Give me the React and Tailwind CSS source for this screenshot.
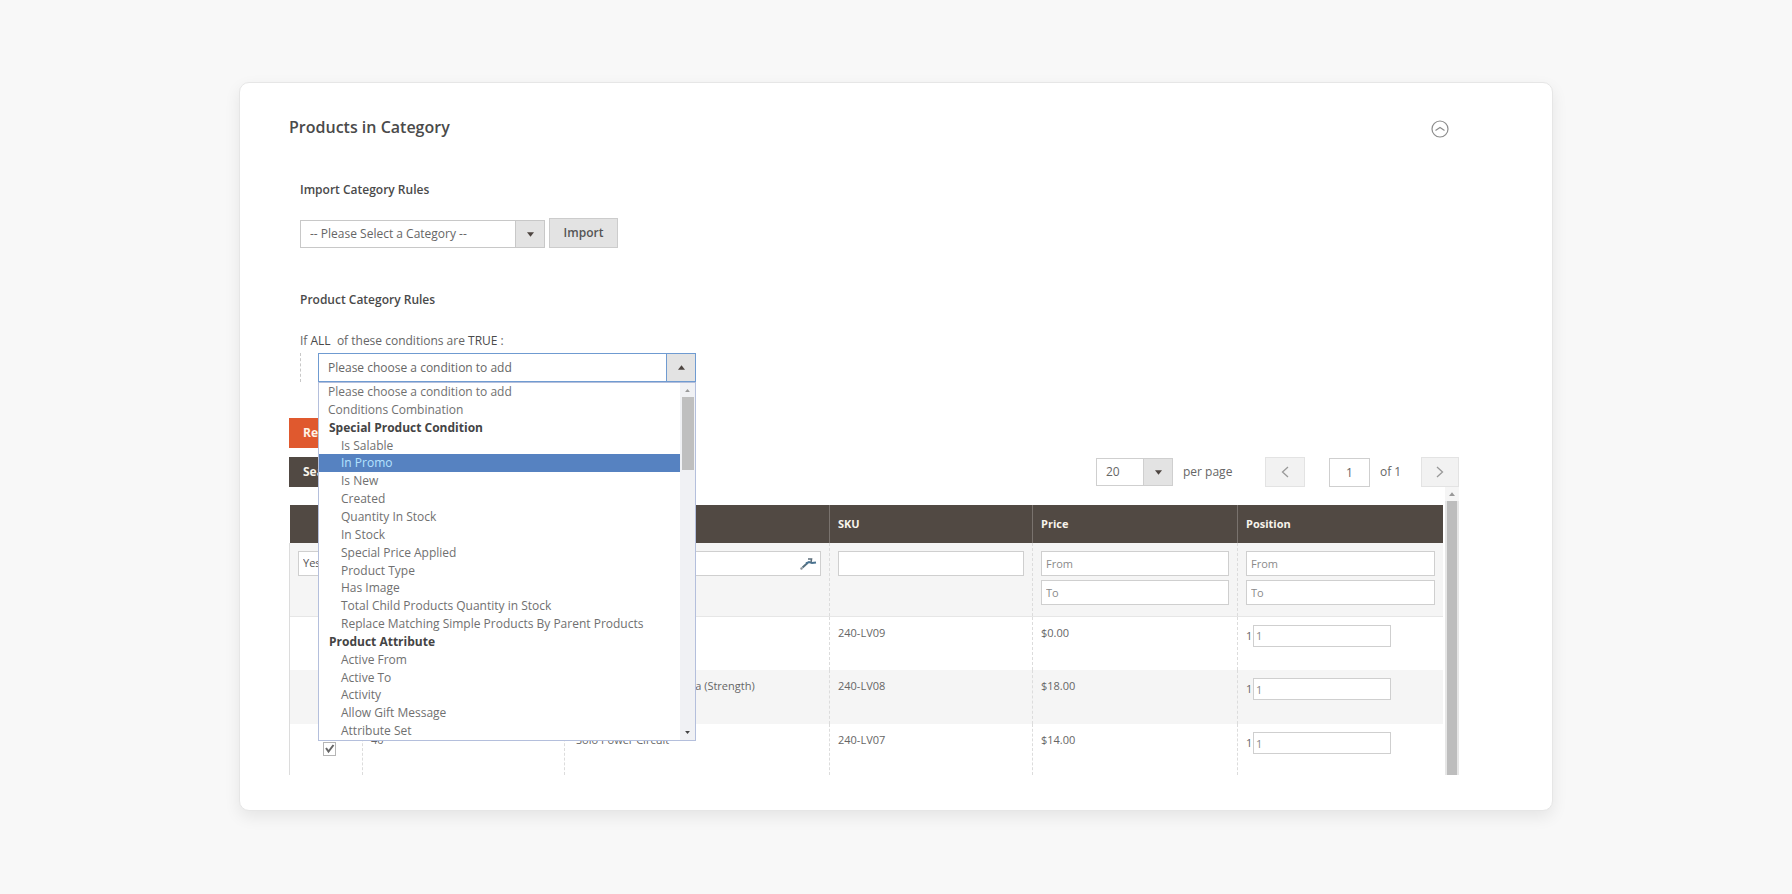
import { useState } from "react";

const conditionOptions = [
  { label: "Please choose a condition to add", kind: "root" },
  { label: "Conditions Combination", kind: "root" },
  { label: "Special Product Condition", kind: "group" },
  { label: "Is Salable" },
  { label: "In Promo" },
  { label: "Is New" },
  { label: "Created" },
  { label: "Quantity In Stock" },
  { label: "In Stock" },
  { label: "Special Price Applied" },
  { label: "Product Type" },
  { label: "Has Image" },
  { label: "Total Child Products Quantity in Stock" },
  { label: "Replace Matching Simple Products By Parent Products" },
  { label: "Product Attribute", kind: "group" },
  { label: "Active From" },
  { label: "Active To" },
  { label: "Activity" },
  { label: "Allow Gift Message" },
  { label: "Attribute Set" },
];

const products = [
  { sku: "240-LV09", price: "$0.00", position: 1 },
  { name: "Advanced Pilates & Yoga (Strength)", sku: "240-LV08", price: "$18.00", position: 1 },
  { id: 40, name: "Solo Power Circuit", sku: "240-LV07", price: "$14.00", position: 1 },
];

const filterInput =
  "block h-[25px] w-full border border-[#cfcfcf] bg-white px-1 text-[11px] text-[#555] outline-none placeholder:text-[#8a8a8a]";
const cell = "border-l border-dashed border-[#dcdcdc] px-2 first:border-solid";
const headCell = "border-l border-[#79726d] px-2";

function Caret({ up = false, className = "" }) {
  return (
    <svg viewBox="0 0 8 5" className={className} aria-hidden="true">
      <path d={up ? "M0 5 L4 0 L8 5 Z" : "M0 0 L4 5 L8 0 Z"} fill="currentColor" />
    </svg>
  );
}

function ArrowBox({ up = false, className = "" }) {
  return (
    <span
      className={`pointer-events-none absolute inset-y-0 right-0 flex w-[30px] items-center justify-center border bg-[#e3e3e3] text-[#4d4540] ${className}`}
    >
      <Caret up={up} className="h-[5px] w-[7px]" />
    </span>
  );
}

function ConditionPicker() {
  const [active, setActive] = useState("In Promo");

  return (
    <div className="relative w-[378px]">
      <select
        aria-label="Condition"
        className="block h-[29px] w-full appearance-none border border-[#6f9bd1] bg-white pl-[9px] text-[12px] text-[#666] outline-none"
      >
        <option>Please choose a condition to add</option>
      </select>
      <ArrowBox up className="border-[#6f9bd1]" />

      {/* Open list */}
      <div className="absolute top-full left-0 z-10 flex w-full border border-[#b4bfdc] bg-white">
        <ul role="listbox" aria-label="Conditions" className="grid h-[357px] flex-1 auto-rows-fr">
          {conditionOptions.map(({ label, kind }) => (
            <li
              key={label}
              role="option"
              aria-selected={label === active}
              onMouseEnter={() => !kind && setActive(label)}
              className={`text-[12px] leading-[17px] ${
                kind === "group"
                  ? "pl-[10px] font-bold text-[#444]"
                  : kind === "root"
                    ? "pl-[9px] text-[#707070]"
                    : label === active
                      ? "bg-[#5682c1] pl-[22px] text-[#b5e2ff]"
                      : "pl-[22px] text-[#707070]"
              }`}
            >
              {label}
            </li>
          ))}
        </ul>
        <div className="flex w-[15px] flex-col items-center bg-[#f0f1f4]">
          <span className="flex h-[14px] items-center text-[#999]">
            <Caret up className="h-[3px] w-[5px]" />
          </span>
          <span className="h-[73px] w-3 bg-[#bfbfbf]" />
          <span className="mt-auto flex h-4 items-center text-[#444]">
            <Caret className="h-[3px] w-[5px]" />
          </span>
        </div>
      </div>
    </div>
  );
}

function Pager() {
  return (
    <div className="flex h-[30px] items-center text-[12px] text-[#666]">
      <div className="relative w-[77px]">
        <select
          id="per-page"
          className="block h-[28px] w-full appearance-none border border-[#cfcfcf] bg-white pl-[9px] outline-none"
        >
          <option>20</option>
        </select>
        <ArrowBox className="border-[#cfcfcf]" />
      </div>
      <label htmlFor="per-page" className="ml-[10px] w-[52px] whitespace-nowrap">
        per page
      </label>
      <button aria-label="Previous page" className="ml-[30px] flex h-[30px] w-10 items-center justify-center border border-[#e3e3e3] bg-[#f2f2f2]">
        <svg viewBox="0 0 8 12" className="h-3 w-2" fill="none" stroke="#999" strokeWidth="1.3">
          <path d="M7 1 L1.5 6 L7 11" />
        </svg>
      </button>
      <input
        id="page"
        defaultValue="1"
        className="ml-6 h-[29px] w-[41px] border border-[#cfcfcf] bg-white text-center outline-none"
      />
      <label htmlFor="page" className="ml-[10px] w-[22px] whitespace-nowrap">
        of 1
      </label>
      <button aria-label="Next page" className="ml-[19px] flex h-[30px] w-[38px] items-center justify-center border border-[#e3e3e3] bg-[#f2f2f2]">
        <svg viewBox="0 0 8 12" className="h-3 w-2" fill="none" stroke="#999" strokeWidth="1.3">
          <path d="M1 1 L6.5 6 L1 11" />
        </svg>
      </button>
    </div>
  );
}

function RowCheckbox({ label }) {
  return (
    <span className="relative flex h-[14px] w-[13px]">
      <input
        type="checkbox"
        defaultChecked
        aria-label={label}
        className="peer h-[14px] w-[13px] appearance-none border border-[#b5b5b5] bg-white"
      />
      <svg
        viewBox="0 0 13 14"
        className="pointer-events-none absolute inset-0 hidden h-[14px] w-[13px] peer-checked:block"
        fill="none"
        stroke="#666"
        strokeWidth="2"
      >
        <path d="M3 6 L5.500 9.500 L10.500 3" />
      </svg>
    </span>
  );
}

function ProductTable() {
  return (
    <table className="flex-1 table-fixed border-collapse text-left text-[11px] text-[#666]">
      <colgroup>
        <col className="w-[73px]" />
        <col className="w-[202px]" />
        <col className="w-[265px]" />
        <col className="w-[203px]" />
        <col className="w-[205px]" />
        <col />
      </colgroup>
      <thead>
        <tr className="h-[38px] bg-[#514943] text-[#f7f3eb]">
          <th />
          <th className={headCell} />
          <th className={headCell} />
          <th className={headCell}>SKU</th>
          <th className={headCell}>Price</th>
          <th className={headCell}>Position</th>
        </tr>
      </thead>
      <tbody>
        <tr className="h-[73px] border-b border-[#e6e6e6] bg-[#f5f5f5] align-top">
          <td className={`${cell} pt-2`}>
            <select aria-label="In category" className={`${filterInput} appearance-none`}>
              <option>Yes</option>
            </select>
          </td>
          <td className={`${cell} pt-2`}>
            <input aria-label="ID" className={filterInput} />
          </td>
          <td className={`${cell} pt-2`}>
            <div className="relative">
              <input aria-label="Name" className={filterInput} />
              <svg viewBox="0 0 18 14" className="absolute top-[6px] right-1 h-[14px] w-[18px]" fill="none">
                <path d="M1.500 12 L3.500 11" stroke="#8b9299" strokeWidth="2" />
                <path d="M3.500 10.500 L8.500 6" stroke="#56707f" strokeWidth="2" />
                <path d="M7 6.500 L10 5 L13 6 L17 5.500" stroke="#4a7391" strokeWidth="2" />
                <path d="M9 2 L12.500 2 L12 5.500" stroke="#5c6f7c" strokeWidth="1.600" />
              </svg>
            </div>
          </td>
          <td className={`${cell} pt-2`}>
            <input aria-label="SKU" className={filterInput} />
          </td>
          <td className={`${cell} pt-2`}>
            <input aria-label="Price from" placeholder="From" className={filterInput} />
            <input aria-label="Price to" placeholder="To" className={`${filterInput} mt-1`} />
          </td>
          <td className={`${cell} pt-2`}>
            <input aria-label="Position from" placeholder="From" className={filterInput} />
            <input aria-label="Position to" placeholder="To" className={`${filterInput} mt-1`} />
          </td>
        </tr>
        {products.map((product) => (
          <tr
            key={product.sku}
            className="h-[54px] align-top leading-4 last:h-[51px] even:bg-white odd:bg-[#f5f5f5]"
          >
            <td className="border-l border-[#dcdcdc] pt-[18px] pl-[33px]">
              <RowCheckbox label={`Select ${product.sku}`} />
            </td>
            <td className={`${cell} pt-2`}>{product.id}</td>
            <td className={`${cell} pt-2 pl-[11px]`}>{product.name}</td>
            <td className={`${cell} pt-2`}>{product.sku}</td>
            <td className={`${cell} pt-2`}>{product.price}</td>
            <td className={`${cell} pt-2`}>
              <div className="flex items-center">
                <span className="w-[7px]">{product.position}</span>
                <input
                  aria-label={`Position of ${product.sku}`}
                  defaultValue={product.position}
                  className="h-[22px] w-[138px] border border-[#cfcfcf] bg-white px-[2px] text-[#888] outline-none"
                />
              </div>
            </td>
          </tr>
        ))}
      </tbody>
    </table>
  );
}

export default function App() {
  return (
    <div className="min-h-screen bg-[#f8f8f8] px-6 py-[82px] font-['Open_Sans','Noto_Sans',sans-serif]">
      <main className="mx-auto w-full max-w-[1314px] rounded-[10px] border border-[#e6e6e6] bg-white pt-8 pr-[93px] pb-[35px] pl-[49px] shadow-[0_6px_16px_rgba(0,0,0,0.08)]">
        <header className="flex h-6 items-center justify-between pr-[10px]">
          <h1 className="text-[16px] font-semibold text-[#4a4a4a]">Products in Category</h1>
          <button aria-label="Collapse section" className="pt-1">
            <svg viewBox="0 0 18 18" className="h-[18px] w-[18px]" fill="none" stroke="#8c8c8c">
              <circle cx="9" cy="9" r="8" strokeWidth="1.2" />
              <path d="M4.500 10.500 L9 7.500 L13.500 10.500" strokeWidth="1.200" />
            </svg>
          </button>
        </header>

        <section className="mt-[41px] pl-[11px]">
          <h2 className="text-[12px] leading-5 font-semibold text-[#4a4a4a]">Import Category Rules</h2>
          <div className="mt-[18px] flex items-end gap-1">
            <div className="relative w-[245px]">
              <select
                aria-label="Category"
                className="block h-[28px] w-full appearance-none border border-[#c8c8c8] bg-white pl-[9px] text-[12px] text-[#666] outline-none"
              >
                <option>-- Please Select a Category --</option>
              </select>
              <ArrowBox className="border-[#c8c8c8]" />
            </div>
            <button className="h-[30px] w-[69px] border border-[#cccccc] bg-[#e3e3e3] text-[12px] font-semibold text-[#555]">
              Import
            </button>
          </div>
        </section>

        <section className="mt-[42px] pl-[11px]">
          <h2 className="text-[12px] leading-5 font-semibold text-[#4a4a4a]">Product Category Rules</h2>
          <p className="mt-[21px] text-[12px] leading-5 text-[#666]">
            If <a href="#all" className="text-[#4a4a4a]">ALL</a>&nbsp; of these conditions are{" "}
            <a href="#true" className="text-[#4a4a4a]">TRUE</a> :
          </p>
          <div className="mt-[2px] border-l border-dashed border-[#c8c8c8] pl-[17px]">
            <ConditionPicker />
          </div>
        </section>

        <div className="mt-9">
          <button className="h-[30px] w-[110px] bg-[#e0592e] pl-[14px] text-left text-[12px] font-bold text-[#fff3e6]">
            Reset
          </button>
        </div>
        <div className="mt-[9px] flex items-center justify-between">
          <button className="h-[30px] w-[110px] bg-[#514943] pl-[14px] text-left text-[12px] font-bold text-[#f7f3eb]">
            Search
          </button>
          <Pager />
        </div>

        <div className="flex">
          <div className="flex min-w-0 flex-1 pt-[18px]">
            <ProductTable />
          </div>
          <div className="ml-[2px] flex w-[14px] flex-col items-center bg-[#e6e6e6]">
            <span className="flex h-[14px] w-full items-center justify-center bg-[#f5f5f5] text-[#999]">
              <Caret up className="h-[4px] w-[6px]" />
            </span>
            <span className="w-[10px] flex-1 bg-[#bdbdbd]" />
          </div>
        </div>
      </main>
    </div>
  );
}
